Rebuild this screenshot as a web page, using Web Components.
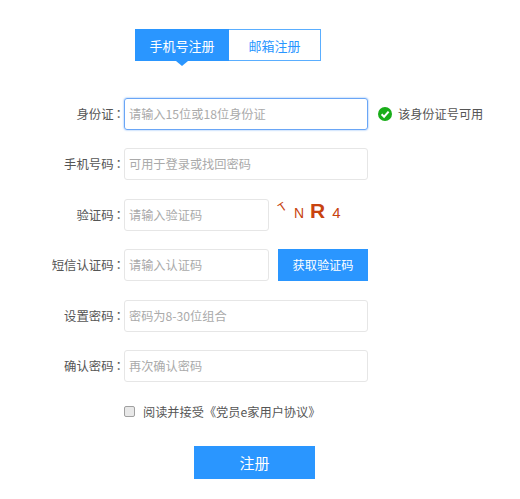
<!DOCTYPE html>
<html lang="zh"><head><meta charset="utf-8"><style>
html,body{margin:0;padding:0;background:#fff}
body{font-family:"Noto Sans CJK SC","Liberation Sans",sans-serif;font-size:12px;color:#555}
</style></head><body>
<reg-page></reg-page>
<script>
class RegTabs extends HTMLElement{constructor(){super();this.attachShadow({mode:'open'}).innerHTML=`<style>
:host{display:flex;margin-left:135px;width:186px;height:32px;box-sizing:border-box}
.t{box-sizing:border-box;height:32px;display:flex;align-items:center;justify-content:center;font-size:13px;position:relative}
.a{width:94px;background:#2a96ff;color:#fff}
.a::after{content:"";position:absolute;left:41px;top:32px;border:6px solid transparent;border-top-color:#2a96ff;border-top-width:5px;border-bottom:0}
.b{width:92px;background:#fff;color:#2a96ff;border:1px solid #5aaeff;border-left:0}
</style><div class="t a">手机号注册</div><div class="t b">邮箱注册</div>`}}
customElements.define('reg-tabs',RegTabs);
class RegRow extends HTMLElement{constructor(){super();const l=this.getAttribute('label'),p=this.getAttribute('ph'),w=this.getAttribute('w')||244,f=this.hasAttribute('focus');
this.attachShadow({mode:'open'}).innerHTML=`<style>
:host{display:flex;align-items:center;height:32px}
label{width:124px;box-sizing:border-box;text-align:right;font-size:12.4px;color:#555;white-space:nowrap;flex:none}
label span{font-family:"Noto Sans CJK TC",sans-serif;margin:0 -1px}
.i{box-sizing:border-box;width:${w}px;height:32px;line-height:30px;border:1px solid ${f?'#6aa6f6':'#e6e6e6'};border-radius:3px;padding-left:4px;font-size:12.2px;color:#aaa;white-space:nowrap;flex:none;${f?'box-shadow:0 0 2px #6aa6f6;':''}}
</style><label>${l}<span lang="zh-Hant">：</span></label><div class="i">${p}</div><slot></slot>`}}
customElements.define('reg-row',RegRow);
class RegCaptcha extends HTMLElement{constructor(){super();this.attachShadow({mode:'open'}).innerHTML=`<style>
:host{display:flex;align-items:baseline;margin-left:9px;color:#c8430f;font-family:"Liberation Sans",sans-serif;transform:translateY(-4px)}
span{display:inline-block;line-height:1;text-align:center}
.a{font-size:12px;width:9px;transform:translate(0,-7px) rotate(-35deg)}
.b{font-size:14px;width:10px;margin-left:7px}
.c{font-size:21px;font-weight:700;width:14px;margin-left:6px}
.d{font-size:15px;width:9px;margin-left:8px}
</style><span class="a">T</span><span class="b">N</span><span class="c">R</span><span class="d">4</span>`}}
customElements.define('reg-captcha',RegCaptcha);
class RegStatus extends HTMLElement{constructor(){super();this.attachShadow({mode:'open'}).innerHTML=`<style>
:host{display:flex;align-items:center;margin-left:10px;gap:6px;font-size:12.2px;color:#555;white-space:nowrap}
svg{display:block}
</style><svg width="14" height="14" viewBox="0 0 14 14"><circle cx="7" cy="7" r="7" fill="#19ad19"/><path d="M3.6 7.2 6.1 9.7 10.6 4.6" fill="none" stroke="#fff" stroke-width="2"/></svg><span>该身份证号可用</span>`}}
customElements.define('reg-status',RegStatus);
class RegBtn extends HTMLElement{constructor(){super();this.attachShadow({mode:'open'}).innerHTML=`<style>
:host{display:flex;align-items:center;justify-content:center;background:#2a96ff;color:#fff;box-sizing:border-box;flex:none}
</style><slot></slot>`}}
customElements.define('reg-btn',RegBtn);
class RegAgree extends HTMLElement{constructor(){super();this.attachShadow({mode:'open'}).innerHTML=`<style>
:host{display:flex;align-items:center;margin-left:124px;gap:8px;height:14px;font-size:12.2px;color:#555;white-space:nowrap}
i{display:block;box-sizing:border-box;width:11px;height:11px;border:1px solid #a0a0a0;border-radius:2px;background:#e8e8e8}
</style><i></i><span>阅读并接受《党员e家用户协议》</span>`}}
customElements.define('reg-agree',RegAgree);
class RegPage extends HTMLElement{constructor(){super();this.attachShadow({mode:'open'}).innerHTML=`<style>
:host{display:block;padding-top:29px;width:520px;height:499px;box-sizing:border-box;overflow:hidden}
.rows{display:flex;flex-direction:column;gap:18.4px;margin-top:37px}
.agree{margin-top:23px}
.submit{display:flex;margin:27px 0 0 194px}
</style>
<reg-tabs></reg-tabs>
<div class="rows">
<reg-row label="身份证" ph="请输入15位或18位身份证" focus><reg-status></reg-status></reg-row>
<reg-row label="手机号码" ph="可用于登录或找回密码"></reg-row>
<reg-row label="验证码" ph="请输入验证码" w="145"><reg-captcha></reg-captcha></reg-row>
<reg-row label="短信认证码" ph="请输入认证码" w="145"><reg-btn style="width:90px;height:32px;margin-left:9px;font-size:12.2px">获取验证码</reg-btn></reg-row>
<reg-row label="设置密码" ph="密码为8-30位组合"></reg-row>
<reg-row label="确认密码" ph="再次确认密码"></reg-row>
</div>
<reg-agree class="agree"></reg-agree>
<div class="submit"><reg-btn style="width:121px;height:33px;font-size:15px">注册</reg-btn></div>`}}
customElements.define('reg-page',RegPage);
</script>
</body></html>
